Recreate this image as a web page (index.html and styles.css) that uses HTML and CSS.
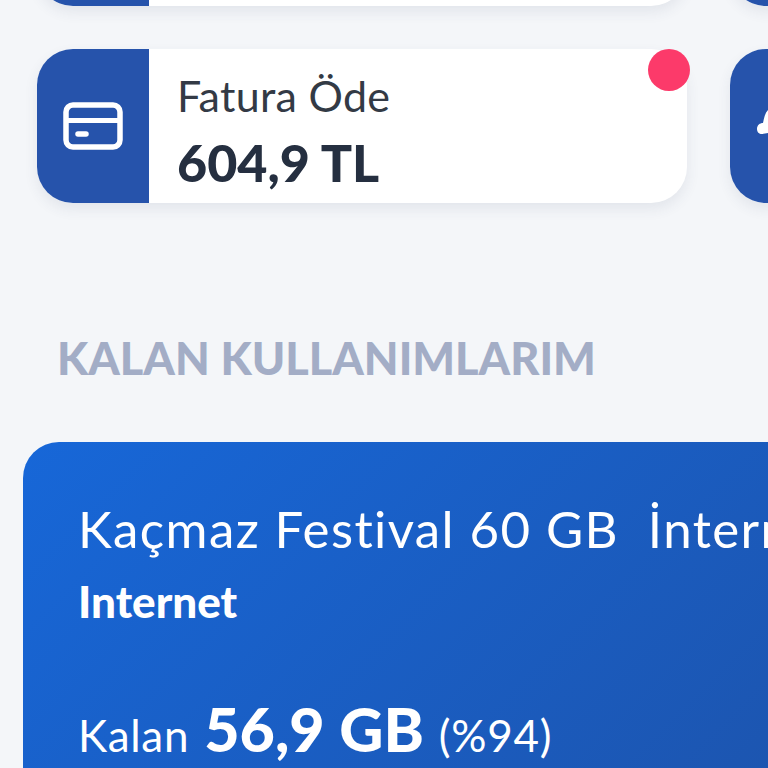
FILE: index.html

```html
<!DOCTYPE html>
<html lang="tr">
<head>
    <meta charset="UTF-8">
    <meta name="viewport" content="width=device-width, initial-scale=1.0">
    <title>Kalan Kullanımlarım</title>
    <link rel="stylesheet" href="styles.css">
</head>
<body>

    <!-- Cut off row above -->
    <div class="card-row card-row-top">
        <div class="action-card">
            <div class="action-icon"></div>
            <div class="action-body"></div>
        </div>
        <div class="action-card">
            <div class="action-icon"></div>
        </div>
    </div>

    <!-- Bill row -->
    <div class="card-row">
        <div class="action-card">
            <div class="action-icon">
                <svg class="card-svg" width="60" height="48" viewBox="0 0 60 48" fill="none" stroke="#fff" stroke-width="5.500">
                    <rect x="3" y="3" width="54" height="42" rx="7"/>
                    <path d="M3 18.500H57" stroke-width="5"/>
                    <path d="M15 32H23" stroke-width="5.500" stroke-linecap="round"/>
                </svg>
            </div>
            <div class="action-body">
                <div class="action-label">Fatura Öde</div>
                <div class="action-value">604,9 TL</div>
            </div>
            <span class="dot"></span>
        </div>
        <div class="action-card">
            <div class="action-icon action-icon-next">
                <svg width="40" height="40" viewBox="0 0 40 40" fill="#fff">
                    <path d="M14 4C11 7 10 12 9 17C6 17 3 19 3 23C3 26 5 28 8 28C10 28 12 27 14 27H40V4Z"/>
                </svg>
            </div>
        </div>
    </div>

    <h2 class="section-title">KALAN KULLANIMLARIM</h2>

    <!-- Usage card -->
    <div class="usage-card">
        <div class="usage-name">Kaçmaz Festival 60 GB&nbsp; İnternet Paketi</div>
        <div class="usage-type">Internet</div>
        <div class="usage-left">Kalan <strong>56,9 GB</strong> <span>(%94)</span></div>
    </div>

</body>
</html>
```

FILE: styles.css

```css
body {
    margin: 0;
    width: 768px;
    height: 768px;
    overflow: hidden;
    background-color: #f4f6f9;
    font-family: "Lato", "Open Sans", sans-serif;
}

.card-row {
    display: flex;
    gap: 43px;
    padding-left: 37px;
    margin-bottom: 0;
}

.card-row-top {
    margin-top: -148px;
    margin-bottom: 43px;
}

.action-card {
    position: relative;
    flex: none;
    display: flex;
    width: 650px;
    height: 154px;
    background: white;
    border-radius: 36px;
    box-shadow: 0 6px 14px rgba(60, 70, 100, 0.09);
}

.action-icon {
    flex: none;
    display: flex;
    align-items: center;
    justify-content: center;
    width: 112px;
    background-color: #2653ab;
    border-radius: 36px 0 0 36px;
}

.action-icon-next {
    justify-content: flex-start;
    padding-left: 24px;
    box-sizing: border-box;
}

.action-body {
    padding: 22px 0 0 28px;
}

.action-label {
    font-size: 43px;
    line-height: 50px;
    color: #333a45;
    letter-spacing: 0.3px;
}

.action-value {
    margin-top: 11px;
    font-size: 52px;
    line-height: 60px;
    font-weight: 900;
    color: #252f40;
}

.dot {
    position: absolute;
    top: 0;
    right: -3px;
    width: 42px;
    height: 42px;
    border-radius: 50%;
    background-color: #fc3a6a;
}

.section-title {
    margin: 126px 0 0 57px;
    font-size: 45px;
    line-height: 58px;
    font-weight: 900;
    color: #a3adc6;
}

.usage-card {
    box-sizing: border-box;
    width: 800px;
    height: 420px;
    margin: 55px 0 0 23px;
    padding: 55px 0 0 55px;
    border-radius: 36px 0 0 0;
    background: linear-gradient(135deg, #1767d8 0%, #1d53ab 100%);
    color: white;
    white-space: nowrap;
}

.usage-name {
    font-size: 51px;
    line-height: 64px;
    letter-spacing: 1.4px;
}

.usage-type {
    margin-top: 15px;
    font-size: 44px;
    line-height: 50px;
    font-weight: 900;
}

.usage-left {
    margin-top: 68px;
    font-size: 44px;
    line-height: 70px;
    letter-spacing: 0.7px;
    word-spacing: 3px;
}

.usage-left strong {
    font-size: 61px;
    font-weight: 900;
    letter-spacing: 0;
    word-spacing: 0;
}
```
